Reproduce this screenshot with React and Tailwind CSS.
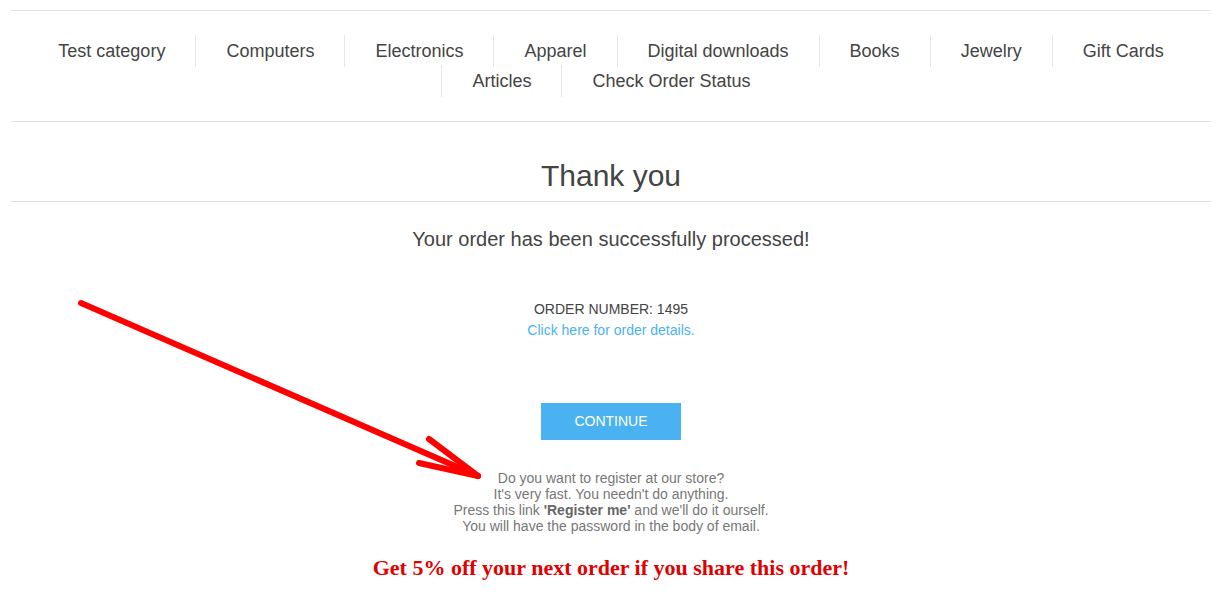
const categories = [
  'Test category',
  'Computers',
  'Electronics',
  'Apparel',
  'Digital downloads',
  'Books',
  'Jewelry',
  'Gift Cards',
  'Articles',
  'Check Order Status',
]

function Arrow() {
  return (
    <svg className="absolute left-0 top-0 pointer-events-none" width="1222" height="610" viewBox="0 0 1222 610">
      <g stroke="#ff0000" strokeWidth="6" strokeLinecap="round" fill="none">
        <line x1="81" y1="303" x2="478" y2="476" />
        <line x1="429" y1="439" x2="478" y2="476" />
        <line x1="419" y1="463" x2="478" y2="476" />
      </g>
    </svg>
  )
}

export default function App() {
  return (
    <div className="relative min-h-[610px] bg-white pt-[10px]" style={{ fontFamily: '"Liberation Sans", Arial, sans-serif' }}>
      <div className="w-[1200px] mx-auto">

        {/* Top menu */}
        <nav className="border-t border-b border-[#e3e3e3] pt-[25px] pb-[25px]">
          <ul className="flex flex-wrap justify-center">
            {categories.map((c, i) => (
              <li key={c} className="flex items-center h-[30px]">
                {i > 0 && <span className="w-px h-[32px] bg-[#e6e6e6]" />}
                <a href="#" className="px-[30px] text-[18px] leading-[30px] text-[#444]">{c}</a>
              </li>
            ))}
          </ul>
        </nav>

        {/* Title */}
        <div className="mt-[36px] pb-[7px] border-b border-[#ddd] text-center">
          <h1 className="text-[30px] leading-[36px] text-[#444]">Thank you</h1>
        </div>

        <div className="text-center">
          <p className="mt-[25px] text-[20px] leading-[24px] text-[#444]">Your order has been successfully processed!</p>

          <div className="mt-[48px] text-[14px] leading-[21px]">
            <div className="text-[#444]">ORDER NUMBER: 1495</div>
            <a href="#" className="text-[#4ab2f1]">Click here for order details.</a>
          </div>

          <button className="mt-[62px] w-[140px] h-[37px] bg-[#4ab2f1] text-white text-[14px] uppercase">
            Continue
          </button>

          <div className="mt-[30px] text-[14px] leading-[16px] text-[#777]">
            <div>Do you want to register at our store?</div>
            <div>It's very fast. You needn't do anything.</div>
            <div>Press this link <b className="text-[#666]">'Register me'</b> and we'll do it ourself.</div>
            <div>You will have the password in the body of email.</div>
          </div>

          <p className="mt-[21px] text-[22px] leading-[26px] font-bold text-[#e00000]" style={{ fontFamily: '"Liberation Serif", "Times New Roman", serif' }}>
            Get 5% off your next order if you share this order!
          </p>
        </div>
      </div>
      <Arrow />
    </div>
  )
}
